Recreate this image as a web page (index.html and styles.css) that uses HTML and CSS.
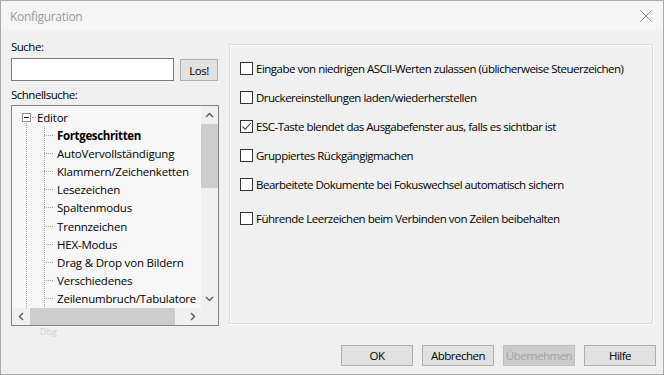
FILE: index.html
```html
<!DOCTYPE html>
<html lang="de">
<head>
<meta charset="utf-8">
<title>Konfiguration</title>
<link rel="stylesheet" href="styles.css">
</head>
<body>
<div class="window">
  <div class="titlebar">
    <span class="title">Konfiguration</span>
    <svg class="close" width="12" height="12" viewBox="0 0 12 12"><path d="M0.5 0.5L11.5 11.5M11.5 0.5L0.5 11.5" stroke="#8a8a8a" stroke-width="1" fill="none"/></svg>
  </div>
  <div class="content">
    <div class="main">
      <div class="left">
        <div class="label label1">Suche:</div>
        <div class="search-row">
          <div class="input"></div>
          <div class="btn small">Los!</div>
        </div>
        <div class="label label2">Schnellsuche:</div>
        <div class="treebox">
          <div class="tree-view">
            <div class="tree">
              <div class="root">
                <span class="expander"><span class="minus"></span></span><span class="root-dots"></span><span class="root-text">Editor</span>
              </div>
              <div class="children">
                <div class="child bold"><span class="hdots"></span>Fortgeschritten</div>
                <div class="child"><span class="hdots"></span>AutoVervollständigung</div>
                <div class="child"><span class="hdots"></span>Klammern/Zeichenketten</div>
                <div class="child"><span class="hdots"></span>Lesezeichen</div>
                <div class="child"><span class="hdots"></span>Spaltenmodus</div>
                <div class="child"><span class="hdots"></span>Trennzeichen</div>
                <div class="child"><span class="hdots"></span>HEX-Modus</div>
                <div class="child"><span class="hdots"></span>Drag &amp; Drop von Bildern</div>
                <div class="child"><span class="hdots"></span>Verschiedenes</div>
                <div class="child"><span class="hdots"></span>Zeilenumbruch/Tabulatore</div>
              </div>
            </div>
          </div>
          <div class="vscroll">
            <div class="arrow"><svg width="9" height="6" viewBox="0 0 9 6"><path d="M1 5L4.5 1.5L8 5" stroke="#606060" stroke-width="1.5" fill="none"/></svg></div>
            <div class="vtrack"><div class="vthumb"></div></div>
            <div class="arrow"><svg width="9" height="6" viewBox="0 0 9 6"><path d="M1 1L4.5 4.5L8 1" stroke="#606060" stroke-width="1.5" fill="none"/></svg></div>
          </div>
          <div class="hscroll">
            <div class="harrow"><svg width="6" height="9" viewBox="0 0 6 9"><path d="M5 1L1.5 4.5L5 8" stroke="#606060" stroke-width="1.5" fill="none"/></svg></div>
            <div class="htrack"><div class="hthumb"></div></div>
            <div class="harrow"><svg width="6" height="9" viewBox="0 0 6 9"><path d="M1 1L4.5 4.5L1 8" stroke="#606060" stroke-width="1.5" fill="none"/></svg></div>
          </div>
          <div class="corner"></div>
        </div>
        <div class="ghost">Dbg</div>
      </div>
      <div class="group">
        <div class="opt"><span class="cb"></span>Eingabe von niedrigen ASCII-Werten zulassen (üblicherweise Steuerzeichen)</div>
        <div class="opt"><span class="cb"></span>Druckereinstellungen laden/wiederherstellen</div>
        <div class="opt"><span class="cb checked"><svg width="11" height="11" viewBox="0 0 11 11"><path d="M1.5 5.5L4.2 8.3L9.8 2" stroke="#333" stroke-width="1.1" fill="none"/></svg></span>ESC-Taste blendet das Ausgabefenster aus, falls es sichtbar ist</div>
        <div class="opt"><span class="cb"></span>Gruppiertes Rückgängigmachen</div>
        <div class="opt"><span class="cb"></span>Bearbeitete Dokumente bei Fokuswechsel automatisch sichern</div>
        <div class="opt last"><span class="cb"></span>Führende Leerzeichen beim Verbinden von Zeilen beibehalten</div>
      </div>
    </div>
    <div class="buttons">
      <div class="btn">OK</div>
      <div class="btn">Abbrechen</div>
      <div class="btn disabled">Übernehmen</div>
      <div class="btn">Hilfe</div>
    </div>
  </div>
</div>
</body>
</html>
```
FILE: styles.css
```css
html, body { margin: 0; padding: 0; }
body {
  width: 664px; height: 375px; overflow: hidden;
  font-family: "Open Sans", "Noto Sans", sans-serif;
  font-size: 11.5px; letter-spacing: -0.5px;
  color: #000;
  background: #f0f0f0;
}
.window {
  box-sizing: border-box;
  width: 664px; height: 375px;
  border: 1px solid #aaaaaa;
  display: flex; flex-direction: column;
  background: #f0f0f0;
}
.titlebar {
  height: 30px; flex: none;
  background: #f5f5f5;
  display: flex; align-items: center; justify-content: space-between;
  padding: 0 11px 0 9px;
}
.title { color: #999999; font-size: 12px; letter-spacing: -0.3px; }
.close { display: block; }
.content { flex: 1; display: flex; flex-direction: column; padding: 0 7px 0 10px; }
.main { display: flex; gap: 10px; height: 292px; padding-top: 13px; }
.left { width: 208px; flex: none; display: flex; flex-direction: column; }
.label { height: 14px; line-height: 14px; }
.label1 { margin-top: -4px; margin-bottom: 4px; }
.label2 { margin-top: 7px; }
.search-row { display: flex; gap: 6px; align-items: flex-start; }
.input {
  box-sizing: border-box; width: 163px; height: 23px;
  border: 1px solid #7a7a7a; background: #fff;
}
.btn {
  box-sizing: border-box;
  background: #e1e1e1; border: 1px solid #adadad;
  display: flex; align-items: center; justify-content: center;
  height: 22px;
}
.btn.small { width: 38px; margin-top: 1px; height: 22px; }
.treebox {
  box-sizing: border-box;
  width: 208px; height: 221px; margin-top: 3px;
  border: 1px solid #828282;
  background: #f7f7f7;
  display: grid;
  grid-template-columns: 1fr 17px;
  grid-template-rows: 1fr 17px;
}
.tree-view { overflow: hidden; }
.tree {
  white-space: nowrap;
  padding-top: 2px;
  background-image: repeating-linear-gradient(to bottom, #a0a0a0 0 1px, transparent 1px 2px);
  background-repeat: no-repeat;
  background-size: 1px 200px;
  background-position: 14px 17px;
  letter-spacing: -0.2px;
}
.root { height: 18px; display: flex; align-items: center; }
.expander {
  box-sizing: border-box; width: 9px; height: 9px;
  border: 1px solid #919191; background: #fff;
  margin-left: 10px;
  display: flex; align-items: center; justify-content: center;
}
.minus { width: 5px; height: 1px; background: #000; }
.root-dots { width: 4px; height: 0; border-top: 1px dotted #a0a0a0; margin: 0 1px; }
.children {
  margin-left: 32px;
  background-image: repeating-linear-gradient(to bottom, #a0a0a0 0 1px, transparent 1px 2px);
  background-repeat: no-repeat;
  background-size: 1px 100%;
  background-position: 0 0;
}
.child { height: 18.2px; display: flex; align-items: center; }
.child.bold { font-weight: 700; letter-spacing: -0.35px; }
.hdots { width: 9px; height: 0; border-top: 1px dotted #a0a0a0; margin-right: 4px; flex: none; }
.vscroll { background: #f0f0f0; display: flex; flex-direction: column; }
.arrow { height: 17px; display: flex; align-items: center; justify-content: center; flex: none; }
.vtrack { flex: 1; }
.vthumb { margin-top: 1px; height: 64px; background: #cdcdcd; }
.hscroll { background: #f0f0f0; display: flex; }
.harrow { width: 17px; display: flex; align-items: center; justify-content: center; flex: none; }
.htrack { flex: 1; display: flex; }
.hthumb { width: 145px; margin-left: 1px; background: #cdcdcd; }
.corner { background: #f0f0f0; }
.ghost { color: #cfcfcf; font-size: 9px; margin: 1px 0 0 29px; line-height: 10px; letter-spacing: 0; }
.group {
  box-sizing: border-box;
  width: 424px; height: 280px;
  border: 1px solid #dcdcdc;
  box-shadow: inset 1px 1px 0 #fff, 1px 1px 0 #fff;
  padding: 15px 0 0 10px;
  display: flex; flex-direction: column;
}
.opt { height: 16px; display: flex; align-items: center; margin-bottom: 13px; white-space: nowrap; }
.opt.last { margin-top: 5px; }
.cb {
  box-sizing: border-box; width: 13px; height: 13px; flex: none;
  border: 1px solid #333333; background: #fff;
  margin-right: 3px;
  display: flex; align-items: center; justify-content: center;
}
.buttons { display: flex; justify-content: flex-end; gap: 9px; padding-top: 9px; }
.buttons .btn { width: 72px; height: 21px; }
.btn.disabled { background: #cccccc; border-color: #bfbfbf; color: #a0a0a0; }
```
